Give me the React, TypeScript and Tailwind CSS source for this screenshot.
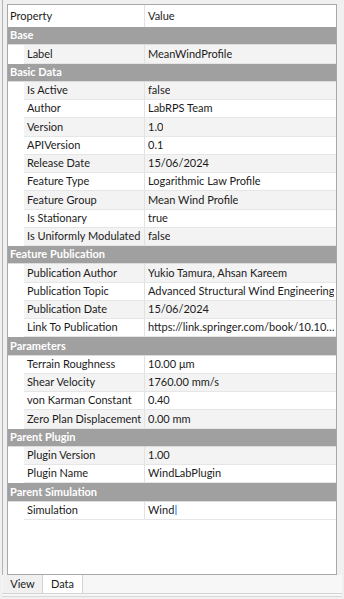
import React from "react";

type Row =
  | { kind: "group"; label: string }
  | { kind: "item"; label: string; value: string; cursor?: boolean };

const rows: Row[] = [
  { kind: "group", label: "Base" },
  { kind: "item", label: "Label", value: "MeanWindProfile" },
  { kind: "group", label: "Basic Data" },
  { kind: "item", label: "Is Active", value: "false" },
  { kind: "item", label: "Author", value: "LabRPS Team" },
  { kind: "item", label: "Version", value: "1.0" },
  { kind: "item", label: "APIVersion", value: "0.1" },
  { kind: "item", label: "Release Date", value: "15/06/2024" },
  { kind: "item", label: "Feature Type", value: "Logarithmic Law Profile" },
  { kind: "item", label: "Feature Group", value: "Mean Wind Profile" },
  { kind: "item", label: "Is Stationary", value: "true" },
  { kind: "item", label: "Is Uniformly Modulated", value: "false" },
  { kind: "group", label: "Feature Publication" },
  { kind: "item", label: "Publication Author", value: "Yukio Tamura, Ahsan Kareem" },
  { kind: "item", label: "Publication Topic", value: "Advanced Structural Wind Engineering" },
  { kind: "item", label: "Publication Date", value: "15/06/2024" },
  { kind: "item", label: "Link To Publication", value: "https://link.springer.com/book/10.1007/978-3-540-88834-9" },
  { kind: "group", label: "Parameters" },
  { kind: "item", label: "Terrain Roughness", value: "10.00 μm" },
  { kind: "item", label: "Shear Velocity", value: "1760.00 mm/s" },
  { kind: "item", label: "von Karman Constant", value: "0.40" },
  { kind: "item", label: "Zero Plan Displacement", value: "0.00 mm" },
  { kind: "group", label: "Parent Plugin" },
  { kind: "item", label: "Plugin Version", value: "1.00" },
  { kind: "item", label: "Plugin Name", value: "WindLabPlugin" },
  { kind: "group", label: "Parent Simulation" },
  { kind: "item", label: "Simulation", value: "Wind", cursor: true },
];

function PropertyRow({ row, index }: { row: Row; index: number }) {
  if (row.kind === "group") {
    return (
      <div className="flex h-[18.25px] items-center border-b border-[#dcdcdc] bg-[#a0a0a0] pl-[2px] text-[11px] font-bold text-white">
        {row.label}
      </div>
    );
  }
  const shaded = index % 2 === 1;
  return (
    <div className="flex h-[18.25px] min-w-0 bg-white">
      <div className="w-[16px] shrink-0" />
      <div
        className={`flex min-w-0 flex-1 items-center border-b border-[#e6e6e6] text-[11px] text-[#1b1b1b] ${
          shaded ? "bg-[#f3f3f3]" : "bg-white"
        }`}
      >
        <div className="flex h-full w-[121px] shrink-0 items-center overflow-hidden border-r border-[#e2e2e2] pl-[3px] whitespace-nowrap">
          {row.label}
        </div>
        <div className="flex h-full min-w-0 flex-1 items-center pl-[3px]">
          <span className="truncate">{row.value}</span>
          {row.cursor && <span className="ml-[1px] h-[10px] w-[2px] shrink-0 bg-[#7cc0ff]" />}
        </div>
      </div>
    </div>
  );
}

export default function App() {
  return (
    <div
      className="flex h-[599px] w-[344px] flex-col overflow-hidden bg-[#f0f0f0]"
      style={{ fontFamily: 'Lato, "Noto Sans", sans-serif' }}
    >
      <div className="ml-[2px] flex h-[575px] border-l border-[#b4b4b4] pt-[4px] pr-[7px] pl-[4px]">
        <div className="flex min-w-0 flex-1 flex-col overflow-hidden border border-[#a8a8a8] bg-white">
          <div className="flex h-[22px] shrink-0 items-center bg-white text-[11px] text-[#1b1b1b]">
            <div className="flex h-full w-[137px] items-center border-r border-[#e2e2e2] pl-[2px]">
              Property
            </div>
            <div className="pl-[3px]">Value</div>
          </div>
          {rows.map((row, i) => (
            <PropertyRow key={row.label} row={row} index={i} />
          ))}
          <div className="flex-1 bg-white" />
        </div>
      </div>
      <div className="mx-[2px] flex h-[22px] flex-col border-b border-[#d8d8d8] bg-[#f7f7f7]">
        <div className="flex h-[19px] border-b border-[#d4d4d4] text-[11px] text-[#1b1b1b]">
          <div className="ml-[1px] flex w-[40px] items-center justify-center border-r border-[#d4d4d4] bg-[#f0f0f0]">
            View
          </div>
          <div className="flex w-[40px] items-center justify-center border-r border-[#d4d4d4] bg-white">
            Data
          </div>
        </div>
      </div>
    </div>
  );
}
